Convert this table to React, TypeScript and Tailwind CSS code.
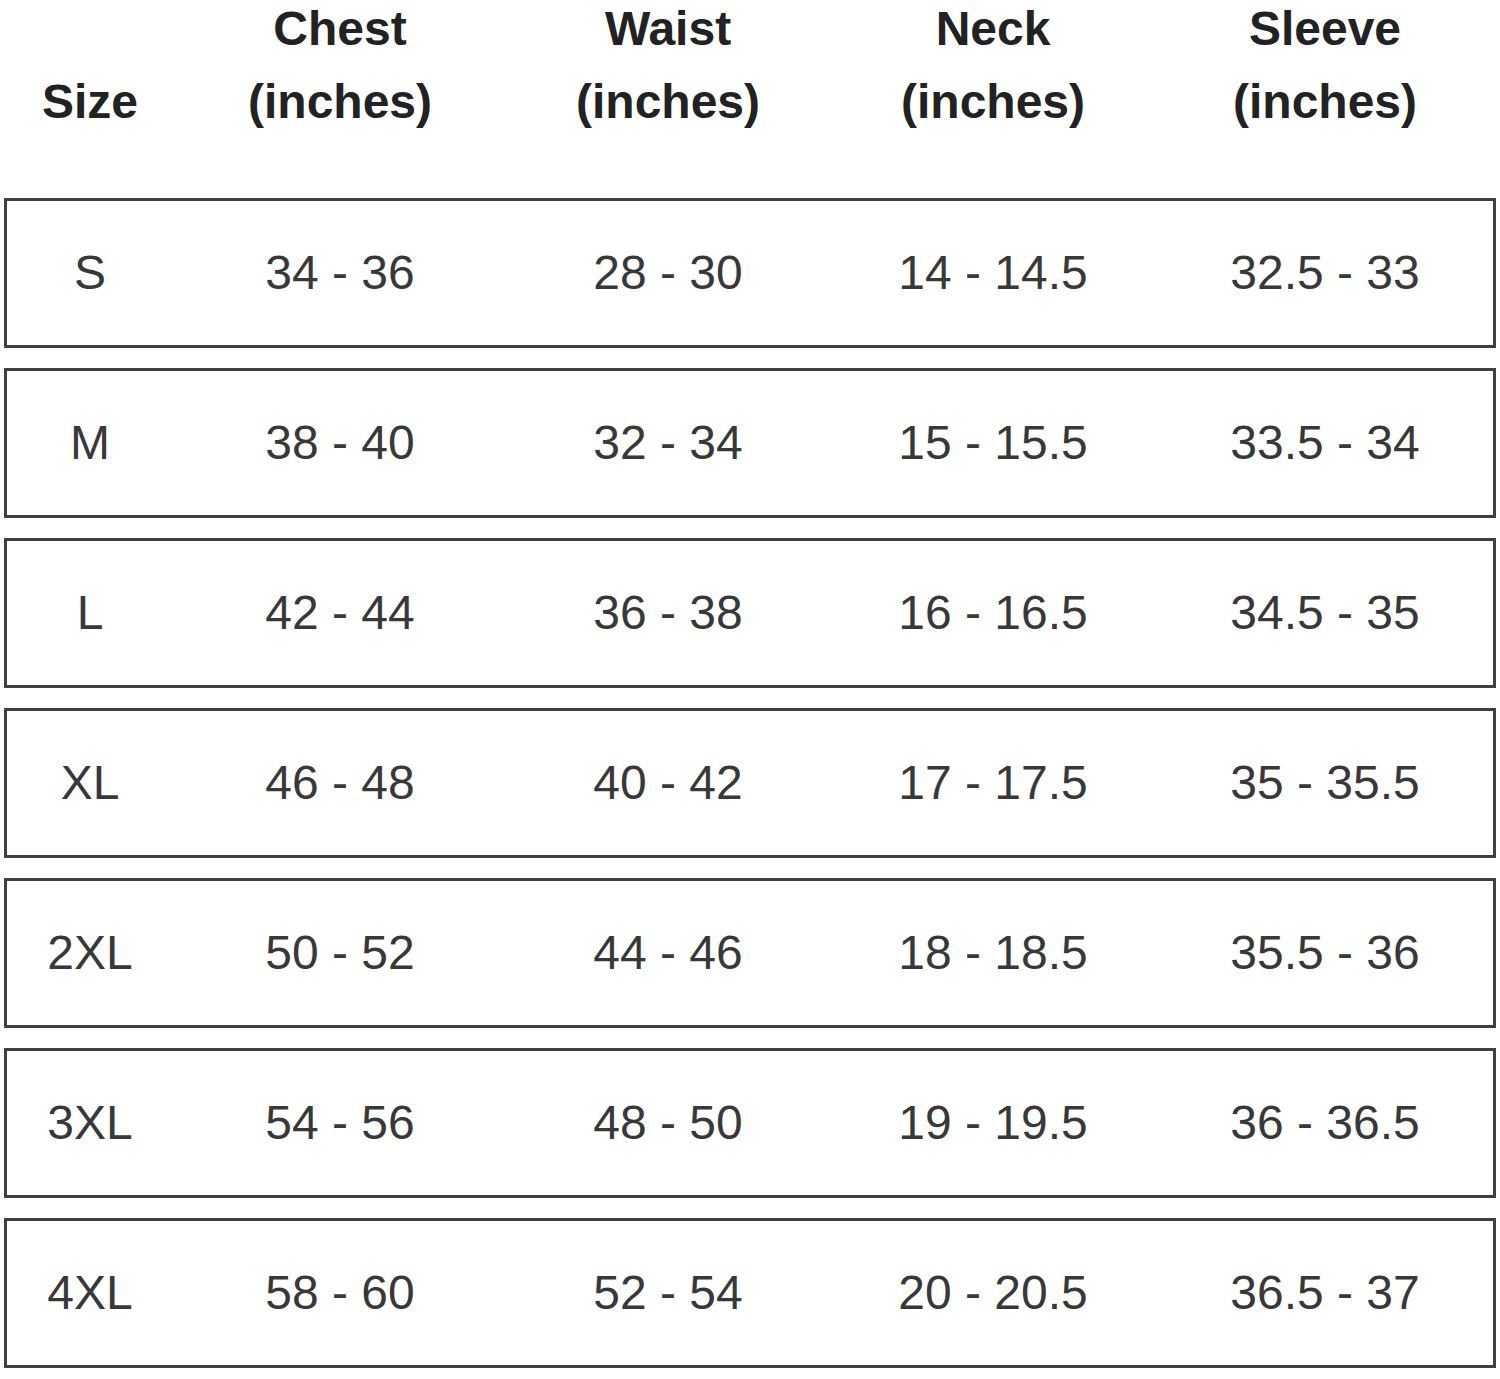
const rows = [
  ['S', '34 - 36', '28 - 30', '14 - 14.5', '32.5 - 33'],
  ['M', '38 - 40', '32 - 34', '15 - 15.5', '33.5 - 34'],
  ['L', '42 - 44', '36 - 38', '16 - 16.5', '34.5 - 35'],
  ['XL', '46 - 48', '40 - 42', '17 - 17.5', '35 - 35.5'],
  ['2XL', '50 - 52', '44 - 46', '18 - 18.5', '35.5 - 36'],
  ['3XL', '54 - 56', '48 - 50', '19 - 19.5', '36 - 36.5'],
  ['4XL', '58 - 60', '52 - 54', '20 - 20.5', '36.5 - 37'],
];

const headers = ['Chest', 'Waist', 'Neck', 'Sleeve'];

const cols = 'grid grid-cols-[166px_334px_322px_328px_1fr]';

export default function App() {
  return (
    <div className="w-[1500px] h-[1379px] bg-white px-[4px] font-['Liberation_Sans',Arial,sans-serif]">
      {/* Header */}
      <div className="flow-root h-[198px] border-x-[3px] border-transparent">
        <div className={`${cols} -mt-[8px] text-[48px] leading-[73px] font-bold text-[#222]`}>
          <div className="flex flex-col justify-end text-center">Size</div>
          {headers.map(h => (
            <div key={h} className="text-center">
              <div>{h}</div>
              <div>(inches)</div>
            </div>
          ))}
        </div>
      </div>

      {/* Rows */}
      <div className="flex flex-col gap-[20px]">
        {rows.map(r => (
          <div
            key={r[0]}
            className={`${cols} h-[150px] border-[3px] border-[#404040] items-center text-[48px] text-[#383838]`}
          >
            {r.map((cell, i) => (
              <div key={i} className="text-center">{cell}</div>
            ))}
          </div>
        ))}
      </div>
    </div>
  );
}
